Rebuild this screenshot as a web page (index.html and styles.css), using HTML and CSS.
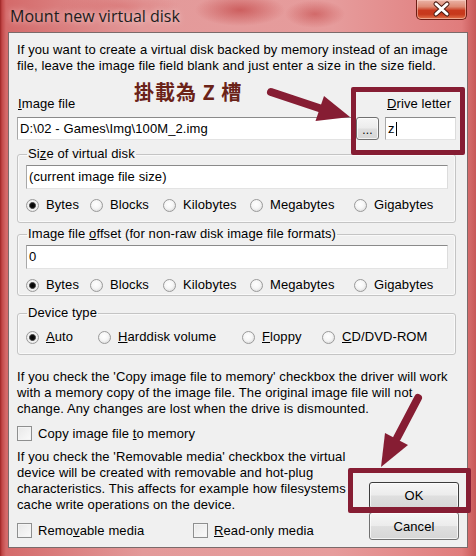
FILE: index.html
```html
<!DOCTYPE html>
<html>
<head>
<meta charset="utf-8">
<link rel="stylesheet" href="styles.css">
</head>
<body>
<div class="window">
  <div class="titlebar">
    <div class="title">Mount new virtual disk</div>
    <div class="close">
      <svg width="51" height="20" viewBox="0 0 51 20">
        <path d="M20 5 L31 15 M31 5 L20 15" stroke="#4a1a12" stroke-width="5" stroke-linecap="round"/>
        <path d="M20 5 L31 15 M31 5 L20 15" stroke="#ffffff" stroke-width="3" stroke-linecap="round"/>
      </svg>
    </div>
  </div>
  <div class="client">
    <p class="intro">If you want to create a virtual disk backed by memory instead of an image<br>file, leave the image file field blank and just enter a size in the size field.</p>
    <div class="file-row">
      <div class="col-image">
        <div class="lbl"><u>I</u>mage file</div>
        <div class="input-row">
          <div class="textbox grow">D:\02 - Games\Img\100M_2.img</div>
          <div class="btn browse">...</div>
        </div>
      </div>
      <div class="col-drive">
        <div class="lbl"><u>D</u>rive letter</div>
        <div class="textbox">z<span class="caret"></span></div>
      </div>
    </div>

    <fieldset class="group g-size">
      <legend>Si<u>z</u>e of virtual disk</legend>
      <div class="textbox field">(current image file size)</div>
      <div class="radios units">
        <div class="opt"><span class="radio on"></span><span>Bytes</span></div>
        <div class="opt"><span class="radio"></span><span>Blocks</span></div>
        <div class="opt"><span class="radio"></span><span>Kilobytes</span></div>
        <div class="opt"><span class="radio"></span><span>Megabytes</span></div>
        <div class="opt"><span class="radio"></span><span>Gigabytes</span></div>
      </div>
    </fieldset>

    <fieldset class="group g-offset">
      <legend>Image file <u>o</u>ffset (for non-raw disk image file formats)</legend>
      <div class="textbox field">0</div>
      <div class="radios units">
        <div class="opt"><span class="radio on"></span><span>Bytes</span></div>
        <div class="opt"><span class="radio"></span><span>Blocks</span></div>
        <div class="opt"><span class="radio"></span><span>Kilobytes</span></div>
        <div class="opt"><span class="radio"></span><span>Megabytes</span></div>
        <div class="opt"><span class="radio"></span><span>Gigabytes</span></div>
      </div>
    </fieldset>

    <fieldset class="group g-type">
      <legend>Device type</legend>
      <div class="radios types">
        <div class="opt"><span class="radio on"></span><span><u>A</u>uto</span></div>
        <div class="opt"><span class="radio"></span><span><u>H</u>arddisk volume</span></div>
        <div class="opt"><span class="radio"></span><span><u>F</u>loppy</span></div>
        <div class="opt"><span class="radio"></span><span><u>C</u>D/DVD-ROM</span></div>
      </div>
    </fieldset>

    <p class="para1">If you check the 'Copy image file to memory' checkbox the driver will work<br>with a memory copy of the image file. The original image file will not<br>change. Any changes are lost when the drive is dismounted.</p>
    <div class="check-row c-copy"><span class="check"></span><span>Copy image file <u>t</u>o memory</span></div>

    <div class="bottom">
      <div class="bottom-left">
        <p class="para2">If you check the 'Removable media' checkbox the virtual<br>device will be created with removable and hot-plug<br>characteristics. This affects for example how filesystems<br>cache write operations on the device.</p>
        <div class="check-pair">
          <div class="check-row c-rem"><span class="check"></span><span>Remo<u>v</u>able media</span></div>
          <div class="check-row"><span class="check"></span><span><u>R</u>ead-only media</span></div>
        </div>
      </div>
      <div class="buttons">
        <div class="btn push ok">OK</div>
        <div class="btn push cancel">Cancel</div>
      </div>
    </div>
  </div>

  <svg class="annot" width="476" height="556" viewBox="0 0 476 556">
    <line x1="271" y1="92" x2="322" y2="109" stroke="#861d33" stroke-width="8" stroke-linecap="round"/>
    <polygon points="350,117 315.5,121 324,96" fill="#861d33"/>
    <line x1="418" y1="398" x2="397" y2="438" stroke="#861d33" stroke-width="8" stroke-linecap="round"/>
    <polygon points="381,467 408,445 385,433" fill="#861d33"/>
  </svg>
  <div class="mark mark-drive"></div>
  <div class="mark mark-ok"></div>
  <div class="note">掛載為 Z 槽</div>
</div>
</body>
</html>
```
FILE: styles.css
```css
html, body {
  margin: 0;
  padding: 0;
}
body {
  font-family: "Liberation Sans", Arial, sans-serif;
  font-size: 13px;
  letter-spacing: 0.1px;
  color: #000;
}
u { text-decoration: underline; text-underline-offset: 1px; }

.window {
  position: relative;
  width: 476px;
  height: 556px;
  overflow: hidden;
  display: flex;
  flex-direction: column;
  background:
    radial-gradient(ellipse 45px 16px at 240px 10px, rgba(185, 45, 45, .55), transparent),
    radial-gradient(ellipse 30px 14px at 315px 14px, rgba(185, 45, 45, .45), transparent),
    radial-gradient(ellipse 60px 12px at 120px 6px, rgba(210, 90, 90, .35), transparent),
    linear-gradient(to right, #9c2424 0, #c24848 2px, #d46a6a 6px, #e39a9a 30%, #e69c9c 70%, #e07c7c 97%, #c85858 100%);
}

.titlebar {
  height: 32px;
  flex: none;
  display: flex;
  justify-content: space-between;
  align-items: flex-start;
  padding-left: 10px;
}
.title {
  font-family: "Open Sans", "Noto Sans", sans-serif;
  font-size: 16px;
  letter-spacing: 0;
  line-height: 20px;
  margin-top: 6px;
  color: #1c1c1c;
  text-shadow: 0 0 6px rgba(255, 240, 240, .8);
}
.close {
  width: 51px;
  height: 20px;
  margin-right: 9px;
  box-sizing: border-box;
  border: 1px solid #6a1d14;
  border-top: none;
  border-radius: 0 0 5px 5px;
  background: linear-gradient(to bottom, #eab3a6 0, #de8a74 35%, #c9391e 55%, #c6381c 75%, #e2734c 100%);
  box-shadow: inset 0 0 0 1px rgba(255, 220, 210, .5);
}
.close svg { display: block; margin: -1px 0 0 -1px; }

.client {
  margin: 0 8px;
  height: 516px;
  box-sizing: border-box;
  border: 1px solid #7b6a6a;
  background: #f0f0f0;
  padding: 9px 11px 0 8px;
}

p { margin: 0; line-height: 16px; white-space: nowrap; }

.intro { height: 32px; }

.file-row {
  display: flex;
  gap: 6px;
  margin-top: 22px;
}
.col-image { flex: 1; }
.col-drive { width: 71px; }
.lbl {
  line-height: 16px;
  margin-bottom: 5px;
  padding-left: 1px;
}
.col-drive .lbl { padding-left: 2px; }
.input-row { display: flex; gap: 3px; }

.textbox {
  box-sizing: border-box;
  height: 23px;
  line-height: 21px;
  padding-left: 2px;
  background: #fff;
  border: 1px solid;
  border-color: #8a8a8a #dcdcdc #e3e3e3 #a8a8a8;
  white-space: nowrap;
}
.grow { flex: 1; }
.caret {
  display: inline-block;
  width: 1px;
  height: 14px;
  background: #000;
  vertical-align: -3px;
  margin-left: 1px;
}

.btn {
  box-sizing: border-box;
  border: 1px solid #707070;
  border-radius: 3px;
  background: linear-gradient(to bottom, #f6f6f6 0, #ececec 48%, #dfdfdf 52%, #d6d6d6 100%);
  display: flex;
  align-items: center;
  justify-content: center;
  box-shadow: inset 0 0 0 1px rgba(255, 255, 255, .7);
}
.browse { width: 23px; height: 23px; font-size: 12px; padding-top: 2px; }

.group {
  margin: 0;
  padding: 3px 7px 9px 8px;
  border: 1px solid #c4c4c4;
  border-radius: 3px;
  min-width: 0;
  box-shadow: inset 0 0 0 1px rgba(255,255,255,.6);
}
.group legend {
  padding: 0 1px;
  margin-left: 1px;
  line-height: 16px;
}
.g-size { margin-top: 6px; }
.g-offset { margin-top: 3px; padding-bottom: 2px; }
.g-type { margin-top: 9px; padding-top: 8px; }

.field { height: 24px; line-height: 22px; }

.radios {
  display: grid;
  height: 16px;
  line-height: 16px;
  margin-top: 8px;
}
.g-type .radios { margin-top: 0; }
.units { grid-template-columns: 64px 73px 87px 104px auto; }
.types { grid-template-columns: 72px 144px 80px auto; }
.opt {
  display: flex;
  align-items: center;
  white-space: nowrap;
}
.radio {
  width: 13px;
  height: 13px;
  box-sizing: border-box;
  border-radius: 50%;
  border: 1px solid #9a9a9a;
  margin-right: 7px;
  flex: none;
  background: radial-gradient(circle at 45% 40%, #ffffff 0, #f6f6f6 45%, #dedede 80%, #cfcfcf 100%);
}
.radio.on {
  background: radial-gradient(circle at 50% 50%, #000 0, #111 2.2px, #666 3.2px, #f4f4f4 3.8px, #e4e4e4 80%, #cfcfcf 100%);
}

.para1 { margin-top: 14px; height: 48px; }

.check-row {
  display: flex;
  align-items: center;
  height: 15px;
  line-height: 15px;
  white-space: nowrap;
}
.check {
  width: 15px;
  height: 15px;
  box-sizing: border-box;
  border: 1px solid #8e8f8f;
  background: linear-gradient(135deg, #e8e8e8, #fafafa);
  box-shadow: inset 0 0 0 1px #f4f4f4;
  margin-right: 6px;
  flex: none;
}
.c-copy { margin-top: 9px; }

.bottom {
  display: flex;
  margin-top: 8px;
}
.bottom-left { flex: 1; }
.para2 { height: 64px; }
.check-pair {
  display: flex;
  margin-top: 10px;
}
.c-rem { width: 176px; }
.buttons {
  width: 90px;
  margin-top: 33px;
  margin-right: -3px;
  display: flex;
  flex-direction: column;
  gap: 3px;
}
.push { height: 27px; width: 90px; }
.ok { border-color: #3c3c3c; }
.cancel { height: 28px; }

.annot {
  position: absolute;
  left: 0;
  top: 0;
  pointer-events: none;
}
.mark {
  position: absolute;
  box-sizing: border-box;
  border: 5px solid #861d33;
  border-radius: 2px;
}
.mark-drive { left: 351px; top: 87px; width: 114px; height: 68px; }
.mark-ok { left: 348px; top: 468px; width: 123px; height: 45px; border-bottom-width: 6px; }
.note {
  position: absolute;
  left: 134px;
  top: 79px;
  font-family: "Noto Sans CJK TC", "Noto Sans CJK SC", sans-serif;
  font-weight: 700;
  font-size: 20px;
  line-height: 26px;
  color: #6a2218;
  letter-spacing: 1px;
  white-space: pre;
}
```
